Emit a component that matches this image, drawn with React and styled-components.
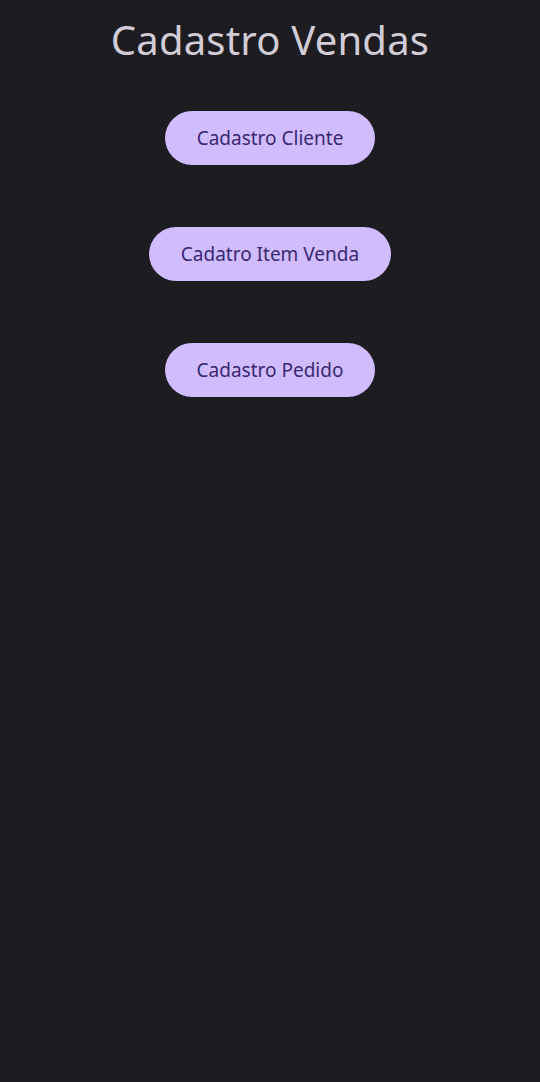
import React from "react";
import styled, { createGlobalStyle } from "styled-components";

const Global = createGlobalStyle`
  html, body { margin: 0; padding: 0; background: #1d1c21; }
  body { font-family: "Noto Sans", "Open Sans", sans-serif; }
`;

const Screen = styled.div`
  min-height: 1082px;
  background: #1d1c21;
  display: flex;
  flex-direction: column;
  align-items: center;
  padding-top: 12px;
  box-sizing: border-box;
`;

const Title = styled.h1`
  margin: 0;
  font-weight: 400;
  font-size: 40px;
  line-height: 56px;
  color: #d1ccd6;
  letter-spacing: 0.2px;
`;

const List = styled.div`
  display: flex;
  flex-direction: column;
  align-items: center;
  gap: 62px;
  margin-top: 43px;
`;

const Button = styled.button`
  height: 54px;
  padding: 0 32px;
  border: none;
  border-radius: 27px;
  background: #d0bcfe;
  color: #3a2870;
  font-family: "Noto Sans", "Open Sans", sans-serif;
  font-size: 19px;
  cursor: pointer;
`;

export default function App() {
  return (
    <>
      <Global />
      <Screen>
        <Title>Cadastro Vendas</Title>
        <List>
          <Button>Cadastro Cliente</Button>
          <Button>Cadatro Item Venda</Button>
          <Button>Cadastro Pedido</Button>
        </List>
      </Screen>
    </>
  );
}
